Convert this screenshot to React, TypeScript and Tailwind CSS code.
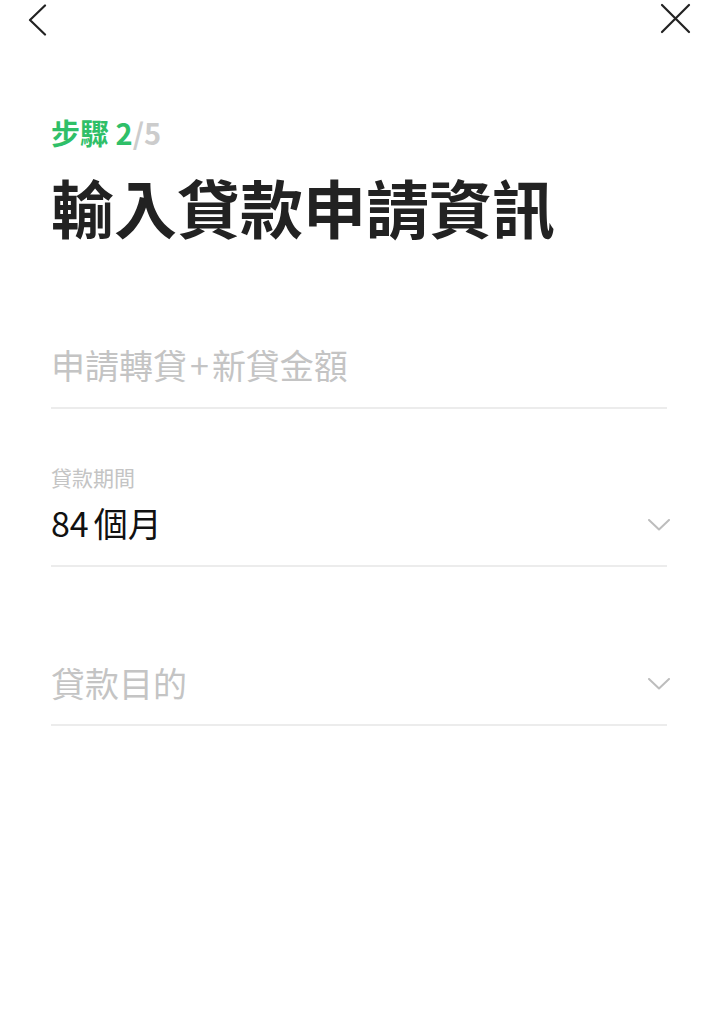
import { useState } from "react"

const font = { fontFamily: '"Noto Sans CJK TC", "Noto Sans", sans-serif' }

function ChevronDown() {
  return (
    <svg width="22" height="12" viewBox="0 0 22 12" fill="none" className="shrink-0">
      <path d="M1 1l10 9.5L21 1" stroke="#bdbdbd" strokeWidth="2" strokeLinecap="round" strokeLinejoin="round" />
    </svg>
  )
}

export default function App() {
  const [months] = useState(84)

  return (
    <div className="min-h-[1024px] w-full bg-white" style={font}>
      {/* Top bar */}
      <div className="flex h-[40px] items-start justify-between">
        <button className="ml-[27px] mt-[4px]">
          <svg width="20" height="32" viewBox="0 0 20 32" fill="none">
            <path d="M18 1.5L3 16l15 14.5" stroke="#222" strokeWidth="2.2" strokeLinecap="round" strokeLinejoin="round" />
          </svg>
        </button>
        <button className="mr-[27px] mt-[3px]">
          <svg width="31" height="31" viewBox="0 0 31 31" fill="none">
            <path d="M2 2l27 27M29 2L2 29" stroke="#222" strokeWidth="2.2" strokeLinecap="round" />
          </svg>
        </button>
      </div>

      <div className="px-[51px]">
        {/* Step */}
        <p className="mt-[73px] text-[29px] font-bold leading-[38px] text-[#2fbf68]">
          步驟 2<span className="text-[#cccccc]">/5</span>
        </p>

        {/* Title */}
        <h1 className="mt-[19px] text-[63px] font-bold leading-[72px] text-[#222222]">輸入貸款申請資訊</h1>

        {/* Amount */}
        <div className="mt-[101px] border-b-2 border-[#ececec] pb-[20px]">
          <p className="text-[34px] leading-[44px] text-[#c4c4c4]">
            申請轉貸<span className="mx-[3px]">+</span>新貸金額
          </p>
        </div>

        {/* Term */}
        <div className="mt-[54px] border-b-2 border-[#ececec] pb-[20px]">
          <p className="text-[21px] leading-[28px] text-[#c4c4c4]">貸款期間</p>
          <div className="mt-[10px] flex items-center justify-between">
            <p className="text-[34px] leading-[44px] text-[#111111]">
              {months}
              <span className="ml-[5px]">個月</span>
            </p>
            <div className="-mr-[3px] mt-[4px]">
              <ChevronDown />
            </div>
          </div>
        </div>

        {/* Purpose */}
        <div className="mt-[94px] flex items-center justify-between border-b-2 border-[#ececec] pb-[19px]">
          <p className="text-[34px] leading-[44px] text-[#c4c4c4]">貸款目的</p>
          <div className="-mr-[3px] mt-[2px]">
            <ChevronDown />
          </div>
        </div>
      </div>
    </div>
  )
}
